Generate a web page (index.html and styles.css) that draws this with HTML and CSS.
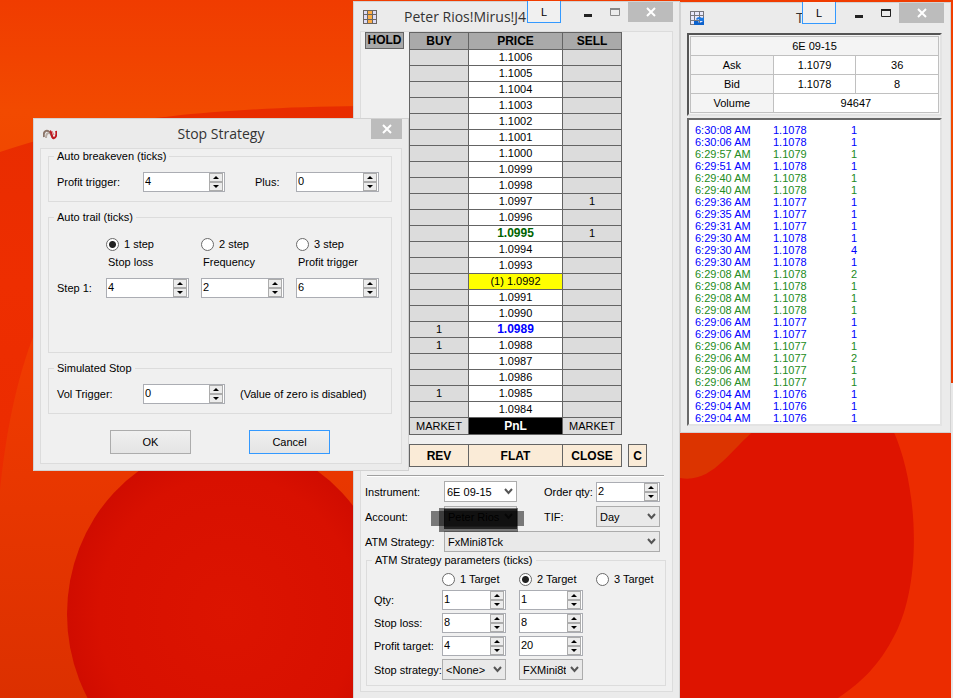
FILE: index.html
```
<!DOCTYPE html>
<html lang="en">
    <head>
        <meta charset="UTF-8">
        <meta name="viewport" content="width=device-width, initial-scale=1.0">
        <title>Trading Desktop</title>
        <link rel="stylesheet" href="styles.css">
    </head>
    <body>
        <svg class="wallpaper" viewBox="0 0 953 698" preserveAspectRatio="none" aria-hidden="true">
            <defs>
                <linearGradient id="sky" x1="0" y1="0" x2="0" y2="1">
                    <stop offset="0" stop-color="#f03c00" />
                    <stop offset="0.16" stop-color="#f24a00" />
                    <stop offset="1" stop-color="#e02c00" />
                </linearGradient>
                <linearGradient id="petal" x1="0" y1="0" x2="0" y2="1">
                    <stop offset="0" stop-color="#e82c00" />
                    <stop offset="0.3" stop-color="#ee2e00" />
                    <stop offset="1" stop-color="#e82800" />
                </linearGradient>
                <linearGradient id="rim" x1="0" y1="0" x2="0" y2="1">
                    <stop offset="0" stop-color="#f23c00" />
                    <stop offset="1" stop-color="#dc3000" />
                </linearGradient>
                <radialGradient id="core">
                    <stop offset="0" stop-color="#dc1400" />
                    <stop offset="0.8" stop-color="#d81000" />
                    <stop offset="1" stop-color="#d00c00" />
                </radialGradient>
            </defs>
            <rect width="953" height="698" fill="url(#sky)" />
            <path d="M0 152C70 128 170 108 360 106V698H0Z" fill="url(#petal)" />
            <path d="M0 490C6 430 18 370 40 320H360V698H0Z" fill="url(#rim)" />
            <ellipse cx="228" cy="614" rx="161" ry="172" fill="url(#core)" />
            <rect x="672" y="420" width="281" height="278" fill="#ec2c00" />
            <path d="M680 434H758C744 446 734 462 722 474C708 484 692 484 680 480Z" fill="#dc3400" />
            <path d="M755 430H893C920 490 922 590 892 640C876 670 856 686 838 698H680V478C712 484 730 450 755 430Z" fill="#de1400" />
            <rect x="951" y="383" width="2" height="315" fill="#e8e8e8" />
        </svg>

        <!-- SuperDOM -->
        <section class="window dom">
            <header class="titlebar">
                <svg class="app-icon" viewBox="0 0 14 14">
                    <rect width="14" height="14" fill="#6b6560" />
                    <path d="M1 1h3v3H1zM1 5h3v4H1zM1 10h3v3H1zM10 1h3v3h-3zM10 5h3v4h-3zM10 10h3v3h-3z" fill="#dcdcf8" />
                    <path d="M5 1h4v3H5zM5 5h4v4H5zM5 10h4v3H5z" fill="#fcae48" />
                </svg>
                <h1>Peter Rios!Mirus!J4</h1>
                <button class="link-btn" type="button">L</button>
                <div class="window-buttons">
                    <button type="button" aria-label="Minimize"><svg viewBox="0 0 12 12"><path d="M2 9.5h8" stroke="#222" stroke-width="3" /></svg></button>
                    <button type="button" aria-label="Maximize"><svg viewBox="0 0 12 12"><path d="M1.5 2.5h9v7h-9z" fill="none" stroke="#888" /><path d="M1 3h10" stroke="#888" stroke-width="2" /></svg></button>
                    <button class="close" type="button" aria-label="Close"><svg viewBox="0 0 12 12"><path d="M2 2l8 8M10 2l-8 8" stroke="#fff" stroke-width="2" /></svg></button>
                </div>
            </header>
            <div class="panel">
                <div class="ladder-area">
                    <button class="hold" type="button">HOLD</button>
                    <table class="ladder">
                        <thead>
                            <tr><th>BUY</th><th class="price">PRICE</th><th>SELL</th></tr>
                        </thead>
                        <tbody>
                            <tr><td></td><td>1.1006</td><td></td></tr>
                            <tr><td></td><td>1.1005</td><td></td></tr>
                            <tr><td></td><td>1.1004</td><td></td></tr>
                            <tr><td></td><td>1.1003</td><td></td></tr>
                            <tr><td></td><td>1.1002</td><td></td></tr>
                            <tr><td></td><td>1.1001</td><td></td></tr>
                            <tr><td></td><td>1.1000</td><td></td></tr>
                            <tr><td></td><td>1.0999</td><td></td></tr>
                            <tr><td></td><td>1.0998</td><td></td></tr>
                            <tr><td></td><td>1.0997</td><td>1</td></tr>
                            <tr><td></td><td>1.0996</td><td></td></tr>
                            <tr><td></td><td class="high">1.0995</td><td>1</td></tr>
                            <tr><td></td><td>1.0994</td><td></td></tr>
                            <tr><td></td><td>1.0993</td><td></td></tr>
                            <tr><td></td><td class="last">(1) 1.0992</td><td></td></tr>
                            <tr><td></td><td>1.0991</td><td></td></tr>
                            <tr><td></td><td>1.0990</td><td></td></tr>
                            <tr><td>1</td><td class="low">1.0989</td><td></td></tr>
                            <tr><td>1</td><td>1.0988</td><td></td></tr>
                            <tr><td></td><td>1.0987</td><td></td></tr>
                            <tr><td></td><td>1.0986</td><td></td></tr>
                            <tr><td>1</td><td>1.0985</td><td></td></tr>
                            <tr><td></td><td>1.0984</td><td></td></tr>
                        </tbody>
                        <tfoot>
                            <tr><td>MARKET</td><td class="pnl">PnL</td><td>MARKET</td></tr>
                        </tfoot>
                    </table>
                </div>
                <div class="actions">
                    <button class="rev" type="button">REV</button>
                    <button class="flat" type="button">FLAT</button>
                    <button class="rev" type="button">CLOSE</button>
                    <button class="center" type="button">C</button>
                </div>
                <hr />
                <form class="order-form">
                    <label for="instrument">Instrument:</label>
                    <select id="instrument" class="white"><option>6E 09-15</option></select>
                    <label class="second" for="order-qty">Order qty:</label>
                    <div class="spinner">
                        <input type="text" id="order-qty" value="2" />
                        <button type="button" class="up" aria-label="Up"></button>
                        <button type="button" class="down" aria-label="Down"></button>
                    </div>

                    <label for="account">Account:</label>
                    <div class="account">
                        <select id="account"><option>Peter Rios</option></select>
                        <div class="mask mask-wide"></div>
                        <div class="mask mask-tall"></div>
                        <div class="mask mask-core"></div>
                    </div>
                    <label class="second" for="tif">TIF:</label>
                    <select id="tif"><option>Day</option></select>

                    <label for="atm">ATM Strategy:</label>
                    <select id="atm" class="wide"><option>FxMini8Tck</option></select>
                </form>
                <fieldset class="params">
                    <legend>ATM Strategy parameters (ticks)</legend>
                    <div class="params-grid">
                        <span></span>
                        <label class="radio"><input type="radio" name="target" />1 Target</label>
                        <label class="radio"><input type="radio" name="target" checked />2 Target</label>
                        <label class="radio"><input type="radio" name="target" />3 Target</label>

                        <label for="qty1">Qty:</label>
                        <div class="spinner">
                            <input type="text" id="qty1" value="1" />
                            <button type="button" class="up" aria-label="Up"></button>
                            <button type="button" class="down" aria-label="Down"></button>
                        </div>
                        <div class="spinner">
                            <input type="text" aria-label="Qty 2" value="1" />
                            <button type="button" class="up" aria-label="Up"></button>
                            <button type="button" class="down" aria-label="Down"></button>
                        </div>

                        <label class="first" for="stop1">Stop loss:</label>
                        <div class="spinner">
                            <input type="text" id="stop1" value="8" />
                            <button type="button" class="up" aria-label="Up"></button>
                            <button type="button" class="down" aria-label="Down"></button>
                        </div>
                        <div class="spinner">
                            <input type="text" aria-label="Stop loss 2" value="8" />
                            <button type="button" class="up" aria-label="Up"></button>
                            <button type="button" class="down" aria-label="Down"></button>
                        </div>

                        <label class="first" for="profit1">Profit target:</label>
                        <div class="spinner">
                            <input type="text" id="profit1" value="4" />
                            <button type="button" class="up" aria-label="Up"></button>
                            <button type="button" class="down" aria-label="Down"></button>
                        </div>
                        <div class="spinner">
                            <input type="text" aria-label="Profit target 2" value="20" />
                            <button type="button" class="up" aria-label="Up"></button>
                            <button type="button" class="down" aria-label="Down"></button>
                        </div>

                        <label class="first" for="strategy1">Stop strategy:</label>
                        <select id="strategy1"><option>&lt;None&gt;</option></select>
                        <select aria-label="Stop strategy 2"><option>FXMini8t</option></select>
                    </div>
                </fieldset>
            </div>
        </section>

        <!-- Time and sales -->
        <section class="window tape">
            <header class="titlebar">
                <svg class="app-icon" viewBox="0 0 14 14">
                    <rect width="14" height="14" fill="#77777d" />
                    <path d="M1 1h3v3H1zM5 1h4v3H5zM10 1h3v3h-3zM1 5h3v4H1zM5 5h4v4H5zM10 5h3v4h-3zM1 10h3v3H1zM5 10h4v3H5zM10 10h3v3h-3z" fill="#e8e8fa" />
                    <path d="M6 8c1-2 4-3 6-1l2-1v4H9l1-1c-1-1-2-1-3 0z" fill="#1c78e0" />
                    <path d="M4 10h5l-1 1c1 1 3 1 5-1h1v4H4z" fill="#0c62cc" />
                </svg>
                <h1>T</h1>
                <button class="link-btn" type="button">L</button>
                <div class="window-buttons">
                    <button type="button" aria-label="Minimize"><svg viewBox="0 0 12 12"><path d="M2 9.5h8" stroke="#222" stroke-width="3" /></svg></button>
                    <button type="button" aria-label="Maximize"><svg viewBox="0 0 12 12"><path d="M1.5 2.5h9v7h-9z" fill="none" stroke="#222" /><path d="M1 3h10" stroke="#222" stroke-width="2" /></svg></button>
                    <button class="close" type="button" aria-label="Close"><svg viewBox="0 0 12 12"><path d="M2 2l8 8M10 2l-8 8" stroke="#fff" stroke-width="2" /></svg></button>
                </div>
            </header>
            <div class="quote-box">
                <table class="quote">
                    <tr><th colspan="3">6E 09-15</th></tr>
                    <tr><th>Ask</th><td>1.1079</td><td>36</td></tr>
                    <tr><th>Bid</th><td>1.1078</td><td>8</td></tr>
                    <tr><th>Volume</th><td colspan="2">94647</td></tr>
                </table>
            </div>
            <div class="trades-box">
                <table class="trades">
                    <tr><td>6:30:08 AM</td><td>1.1078</td><td>1</td></tr>
                    <tr><td>6:30:06 AM</td><td>1.1078</td><td>1</td></tr>
                    <tr class="ask"><td>6:29:57 AM</td><td>1.1079</td><td>1</td></tr>
                    <tr><td>6:29:51 AM</td><td>1.1078</td><td>1</td></tr>
                    <tr class="ask"><td>6:29:40 AM</td><td>1.1078</td><td>1</td></tr>
                    <tr class="ask"><td>6:29:40 AM</td><td>1.1078</td><td>1</td></tr>
                    <tr><td>6:29:36 AM</td><td>1.1077</td><td>1</td></tr>
                    <tr><td>6:29:35 AM</td><td>1.1077</td><td>1</td></tr>
                    <tr><td>6:29:31 AM</td><td>1.1077</td><td>1</td></tr>
                    <tr><td>6:29:30 AM</td><td>1.1078</td><td>1</td></tr>
                    <tr><td>6:29:30 AM</td><td>1.1078</td><td>4</td></tr>
                    <tr><td>6:29:30 AM</td><td>1.1078</td><td>1</td></tr>
                    <tr class="ask"><td>6:29:08 AM</td><td>1.1078</td><td>2</td></tr>
                    <tr class="ask"><td>6:29:08 AM</td><td>1.1078</td><td>1</td></tr>
                    <tr class="ask"><td>6:29:08 AM</td><td>1.1078</td><td>1</td></tr>
                    <tr class="ask"><td>6:29:08 AM</td><td>1.1078</td><td>1</td></tr>
                    <tr><td>6:29:06 AM</td><td>1.1077</td><td>1</td></tr>
                    <tr><td>6:29:06 AM</td><td>1.1077</td><td>1</td></tr>
                    <tr class="ask"><td>6:29:06 AM</td><td>1.1077</td><td>1</td></tr>
                    <tr class="ask"><td>6:29:06 AM</td><td>1.1077</td><td>2</td></tr>
                    <tr class="ask"><td>6:29:06 AM</td><td>1.1077</td><td>1</td></tr>
                    <tr class="ask"><td>6:29:06 AM</td><td>1.1077</td><td>1</td></tr>
                    <tr><td>6:29:04 AM</td><td>1.1076</td><td>1</td></tr>
                    <tr><td>6:29:04 AM</td><td>1.1076</td><td>1</td></tr>
                    <tr><td>6:29:04 AM</td><td>1.1076</td><td>1</td></tr>
                </table>
            </div>
        </section>

        <!-- Stop strategy dialog -->
        <section class="window dialog">
            <header class="titlebar">
                <svg class="app-icon" viewBox="0 0 14 14">
                    <path d="M1 10C0 6 2 3 5 4c3 1 3 5 5 7" fill="none" stroke="#8a7468" stroke-width="2" />
                    <path d="M3 11C3 8 4 6 6 6" fill="none" stroke="#b8aca4" stroke-width="2" />
                    <path d="M7 4c2 1 1 5 3 7 3 1 4-4 3-7" fill="none" stroke="#c01820" stroke-width="2" />
                    <path d="M9 4c1 1 1 3 2 4" fill="none" stroke="#d87878" />
                </svg>
                <h1>Stop Strategy</h1>
                <div class="window-buttons">
                    <button class="close" type="button" aria-label="Close"><svg viewBox="0 0 12 12"><path d="M2 2l8 8M10 2l-8 8" stroke="#fff" stroke-width="2" /></svg></button>
                </div>
            </header>
            <form class="panel">
                <fieldset>
                    <legend>Auto breakeven (ticks)</legend>
                    <div class="pair-row">
                        <label for="trigger">Profit trigger:</label>
                        <div class="spinner">
                            <input type="text" id="trigger" value="4" />
                            <button type="button" class="up" aria-label="Up"></button>
                            <button type="button" class="down" aria-label="Down"></button>
                        </div>
                        <label class="plus" for="plus">Plus:</label>
                        <div class="spinner">
                            <input type="text" id="plus" value="0" />
                            <button type="button" class="up" aria-label="Up"></button>
                            <button type="button" class="down" aria-label="Down"></button>
                        </div>
                    </div>
                </fieldset>
                <fieldset class="trail">
                    <legend>Auto trail (ticks)</legend>
                    <div class="trail-grid">
                        <span></span>
                        <label class="radio"><input type="radio" name="steps" checked />1 step</label>
                        <label class="radio"><input type="radio" name="steps" />2 step</label>
                        <label class="radio"><input type="radio" name="steps" />3 step</label>
                    </div>
                    <div class="trail-grid heads">
                        <span></span>
                        <label for="trail-stop">Stop loss</label>
                        <label for="trail-freq">Frequency</label>
                        <label for="trail-profit">Profit trigger</label>
                    </div>
                    <div class="trail-grid">
                        <span>Step 1:</span>
                        <div class="spinner">
                            <input type="text" id="trail-stop" value="4" />
                            <button type="button" class="up" aria-label="Up"></button>
                            <button type="button" class="down" aria-label="Down"></button>
                        </div>
                        <div class="spinner">
                            <input type="text" id="trail-freq" value="2" />
                            <button type="button" class="up" aria-label="Up"></button>
                            <button type="button" class="down" aria-label="Down"></button>
                        </div>
                        <div class="spinner">
                            <input type="text" id="trail-profit" value="6" />
                            <button type="button" class="up" aria-label="Up"></button>
                            <button type="button" class="down" aria-label="Down"></button>
                        </div>
                    </div>
                </fieldset>
                <fieldset>
                    <legend>Simulated Stop</legend>
                    <div class="note-row">
                        <label for="vol">Vol Trigger:</label>
                        <div class="spinner">
                            <input type="text" id="vol" value="0" />
                            <button type="button" class="up" aria-label="Up"></button>
                            <button type="button" class="down" aria-label="Down"></button>
                        </div>
                        <span class="note">(Value of zero is disabled)</span>
                    </div>
                </fieldset>
                <div class="dialog-buttons">
                    <button type="button" class="btn">OK</button>
                    <button type="button" class="btn btn-focus">Cancel</button>
                </div>
            </form>
        </section>
    </body>
</html>
```
FILE: styles.css
```
* {
    box-sizing: border-box;
}

body {
    margin: 0;
    height: 100vh;
    position: relative;
    overflow: hidden;
    background: #ee3c00;
    font-family: "Liberation Sans", Arial, sans-serif;
    font-size: 11px;
    line-height: 14px;
    color: #000;
}

button, input, select {
    margin: 0;
    padding: 0;
    font: inherit;
    color: inherit;
    border-radius: 0;
}

table {
    border-collapse: collapse;
    table-layout: fixed;
}

th, td {
    padding: 0;
    text-align: center;
}

label, span {
    white-space: nowrap;
}

.wallpaper {
    position: absolute;
    inset: 0;
    width: 100%;
    height: 100%;
}

/* windows float on the desktop */
.window {
    position: absolute;
    padding: 0 6px 6px;
    background: #ebebeb;
    border: 1px solid #d2d2d2;
}

.dom {
    left: 353px;
    top: 1px;
    width: 327px;
    padding-bottom: 8px;
}

.tape {
    right: 2px;
    top: 2px;
    width: 271px;
    padding-right: 8px;
}

.dialog {
    left: 33px;
    top: 118px;
    width: 376px;
}

.titlebar {
    position: relative;
    display: flex;
    align-items: center;
    height: 29px;
    padding-left: 3px;
}

.tape .titlebar {
    height: 30px;
    margin-right: -2px;
}

.titlebar h1 {
    flex: 1;
    margin: 0;
    font-family: "Open Sans", sans-serif;
    font-size: 14px;
    font-weight: normal;
    line-height: 28px;
    color: #333;
    white-space: nowrap;
}

.app-icon {
    width: 14px;
    height: 14px;
}

.dialog h1 {
    padding-left: 14px;
    text-align: center;
}

.dom h1 {
    padding-left: 27px;
}

.tape h1 {
    padding-left: 92px;
}

.link-btn {
    position: absolute;
    top: -1px;
    right: 112px;
    width: 34px;
    height: 22px;
    background: #f0f0f0;
    border: 1px solid #3399ff;
    border-top: none;
}

.tape .link-btn {
    right: 108px;
}

.window-buttons {
    display: flex;
    align-self: flex-start;
}

.window-buttons button {
    display: flex;
    align-items: center;
    justify-content: center;
    width: 27px;
    height: 20px;
    background: none;
    border: none;
}

.window-buttons svg {
    width: 12px;
    height: 12px;
}

.window-buttons .close {
    width: 45px;
    background: #bcbcbc;
}

.dialog .window-buttons .close {
    width: 31px;
}

.panel {
    background: #f0f0f0;
    border: 1px solid #dcdcdc;
}

.dialog .panel {
    padding: 0 9px 9px 7px;
}

.dom .panel {
    padding-bottom: 5px;
}

/* ladder */
.ladder-area {
    display: flex;
    align-items: flex-start;
    gap: 5px;
    padding-left: 4px;
}

.hold {
    width: 39px;
    height: 17px;
    background: #a9a9a9;
    border: 1px solid #646464;
    font-size: 12px;
    font-weight: bold;
    line-height: 15px;
}

.ladder {
    width: 213px;
    line-height: 15px;
}

.ladder th, .ladder td {
    border: 1px solid #646464;
}

.ladder th {
    background: #a9a9a9;
    font-size: 12px;
    line-height: 16px;
}

.ladder .price {
    width: 94px;
}

.ladder td {
    height: 16px;
    background: #dcdcdc;
}

.ladder td:nth-child(2) {
    background: #fff;
}

.ladder .high, .ladder .low, .ladder .pnl {
    font-size: 12px;
    font-weight: bold;
}

.ladder .high {
    color: #006400;
}

.ladder .low {
    color: #0000ff;
}

.ladder .last:nth-child(2) {
    background: #ffff00;
}

.ladder tfoot td {
    line-height: 16px;
}

.ladder .pnl:nth-child(2) {
    background: #000;
    color: #fff;
}

.actions {
    display: flex;
    margin-top: 9px;
    padding-left: 48px;
}

.actions button {
    height: 23px;
    background: #faebd7;
    border: 1px solid #646464;
    font-size: 12px;
    font-weight: bold;
}

.actions .rev {
    width: 60px;
}

.actions .flat {
    width: 95px;
    margin: 0 -1px;
}

.actions .center {
    width: 19px;
    margin-left: 6px;
}

hr {
    margin: 8px 8px 4px 6px;
    border: none;
    border-top: 1px solid #a0a0a0;
    border-bottom: 1px solid #fff;
}

/* form controls */
.spinner {
    display: grid;
    grid-template-columns: 1fr 14px;
    grid-template-rows: 9px 9px;
    height: 20px;
    padding-right: 1px;
    background: #fff;
    border: 1px solid #abadb3;
}

.spinner input {
    grid-row: 1 / 3;
    width: 100%;
    padding: 0 0 2px 1px;
    background: none;
    border: none;
    outline: none;
}

.spinner button {
    height: 9px;
    background: #ececec;
    border: 1px solid #acacac;
}

.spinner button::after {
    content: "";
    display: block;
    width: 0;
    margin: 0 auto;
    border: 3px solid transparent;
}

.spinner .up::after {
    border-top: none;
    border-bottom-color: #000;
}

.spinner .down::after {
    border-bottom: none;
    border-top-color: #000;
}

select {
    width: 100%;
    height: 21px;
    padding: 0 16px 0 3px;
    appearance: none;
    background: #e9e9e9 url("data:image/svg+xml,%3Csvg xmlns='http://www.w3.org/2000/svg' width='9' height='7'%3E%3Cpath d='M1 1l3.5 4L8 1' fill='none' stroke='%23555' stroke-width='2'/%3E%3C/svg%3E") no-repeat right 3px center;
    border: 1px solid #acacac;
}

select.white {
    padding-left: 2px;
    background-color: #fff;
}

.radio {
    display: flex;
    align-items: center;
    gap: 5px;
    height: 16px;
}

.radio input {
    flex: none;
    width: 13px;
    height: 13px;
    appearance: none;
    background: #fff;
    border: 1px solid #6a6a6a;
    border-radius: 50%;
}

.radio input:checked {
    background: radial-gradient(circle, #222 3px, #fff 4px);
}

.order-form {
    display: grid;
    grid-template-columns: 79px 73px 1fr 64px;
    row-gap: 4px;
    align-items: center;
    padding: 0 12px 0 4px;
}

.order-form .second {
    padding-left: 27px;
}

.order-form .wide {
    grid-column: 2 / 5;
}

.account {
    position: relative;
}

/* account name is blacked out */
.account select {
    display: block;
}

.mask {
    position: absolute;
    background: rgba(0, 0, 0, 0.5);
}

.mask-wide {
    inset: 5px -7px 1px -13px;
}

.mask-tall {
    inset: 2px -1px -5px -5px;
}

.mask-core {
    inset: 3px 0 -2px 0;
    background: rgba(0, 0, 0, 0.7);
}

fieldset {
    min-width: 0;
    margin: 0 0 8px;
    padding: 9px 12px 9px 8px;
    border: 1px solid #dcdcdc;
}

legend {
    margin-left: -3px;
    padding: 0 3px;
}

.params {
    margin: 1px 6px 0 5px;
    padding: 4px 5px 5px 7px;
}

.params legend {
    margin-left: -2px;
}

.params-grid {
    display: grid;
    grid-template-columns: 55px repeat(3, 1fr);
    gap: 3px 13px;
    align-items: center;
}

.params-grid select {
    height: 21px;
}

.params-grid .first {
    grid-column: 1;
}

.pair-row, .note-row {
    display: grid;
    grid-template-columns: 86px 82px 1fr 83px;
    align-items: center;
}

.plus {
    padding-left: 30px;
}

.note {
    padding-left: 15px;
}

.trail {
    padding-top: 12px;
    padding-bottom: 54px;
}

.trail-grid {
    display: grid;
    grid-template-columns: 37px repeat(3, 1fr);
    column-gap: 12px;
    align-items: center;
}

.heads {
    margin: 2px 0 8px;
    line-height: 16px;
}

.heads label {
    padding-left: 2px;
}

.dialog-buttons {
    display: flex;
    justify-content: center;
    gap: 58px;
    margin-top: 16px;
}

.btn {
    width: 81px;
    height: 24px;
    background: linear-gradient(#f0f0f0, #e4e4e4);
    border: 1px solid #acacac;
}

.btn-focus {
    border-color: #3399ff;
}

/* time and sales */
.quote-box {
    margin-bottom: 2px;
    padding: 1px;
    background: #f4f4f4;
    border: 2px solid #555;
    border-right-color: #e3e3e3;
    border-bottom-color: #e3e3e3;
}

.quote {
    width: 100%;
    line-height: 18px;
}

.quote th, .quote td {
    border: 1px solid #c0c0c0;
}

.quote th {
    background: #f4f4f4;
    font-weight: normal;
}

.quote td {
    background: #fff;
}

.trades-box {
    padding: 4px 0 0 6px;
    background: #fff;
    border: 2px solid #696969;
    border-right-color: #e3e3e3;
    border-bottom-color: #e3e3e3;
}

.trades {
    line-height: 12px;
    color: #0000ff;
}

.trades td {
    width: 78px;
    text-align: left;
}

.trades td:last-child {
    width: 6px;
}

.trades .ask {
    color: #228b22;
}
```
